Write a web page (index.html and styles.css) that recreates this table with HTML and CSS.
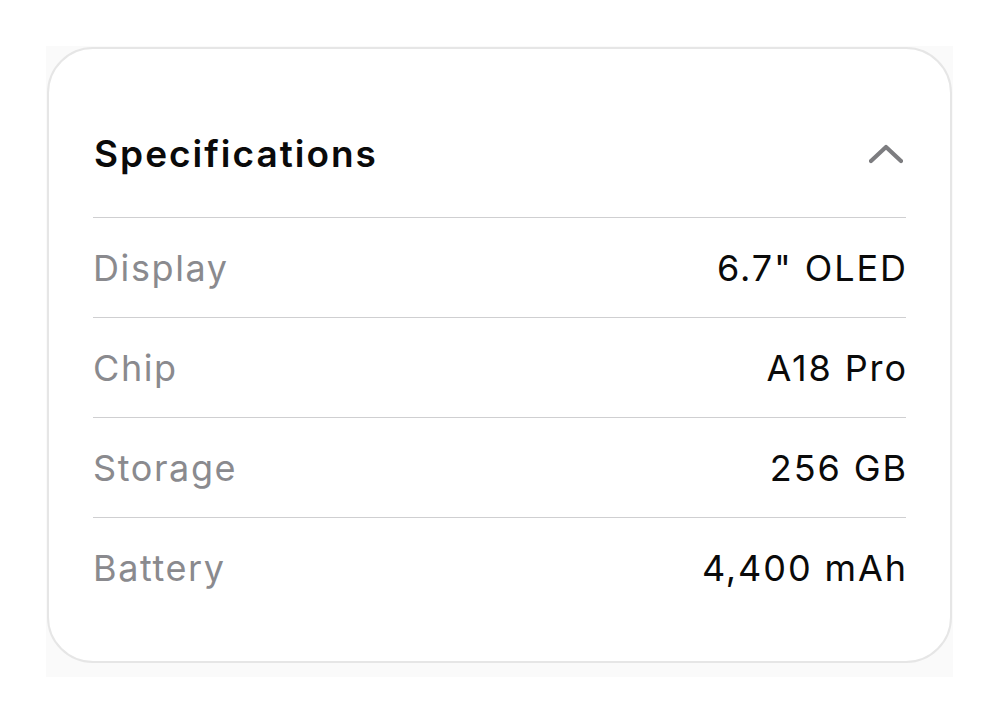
FILE: index.html
```html
<!DOCTYPE html>
<html>
<head>
<meta charset="utf-8">
<link rel="stylesheet" href="styles.css">
</head>
<body>
<div class="frame">
  <section class="card">
    <header class="head">
      <h2 class="title">Specifications</h2>
      <svg class="chev" width="34" height="20" viewBox="0 0 34 20"><path d="M2 17 L17 3 L32 17" fill="none" stroke="#7d7d80" stroke-width="4.2" stroke-linecap="round" stroke-linejoin="round"/></svg>
    </header>
    <div class="row"><span class="label">Display</span><span class="value">6.7" OLED</span></div>
    <div class="row"><span class="label">Chip</span><span class="value">A18 Pro</span></div>
    <div class="row"><span class="label">Storage</span><span class="value">256 GB</span></div>
    <div class="row"><span class="label">Battery</span><span class="value">4,400 mAh</span></div>
  </section>
</div>
</body>
</html>
```
FILE: styles.css
```css
html, body { margin: 0; padding: 0; background: #ffffff; }
body { font-family: Inter, "Noto Sans", sans-serif; }
.frame {
  margin: 46px 0 0 46px;
  width: 907px;
  height: 631px;
  background: #fafafa;
  padding: 1px 1px 0 1px;
  box-sizing: border-box;
}
.card {
  width: 905px;
  height: 616px;
  box-sizing: border-box;
  background: #ffffff;
  border: 2px solid #e6e6e6;
  border-radius: 46px;
  padding: 44px 44px 43px 44px;
  display: flex;
  flex-direction: column;
}
.head {
  height: 125px;
  display: flex;
  align-items: center;
  justify-content: space-between;
  border-bottom: 1.5px solid #cfcfd1;
  box-sizing: border-box;
}
.title {
  margin: -3px 0 0 1px;
  font-size: 37px;
  font-weight: 600;
  color: #0a0a0a;
  letter-spacing: 2px;
}
.chev { margin-right: 3px; margin-top: -3px; }
.row {
  height: 100px;
  display: flex;
  align-items: center;
  justify-content: space-between;
  border-bottom: 1.5px solid #cfcfd1;
  box-sizing: border-box;
  font-size: 36px;
}
.row:last-child { border-bottom: none; }
.label { color: #8a8a8e; letter-spacing: 1.6px; }
.value { color: #0a0a0a; letter-spacing: 1.9px; margin-right: -1.9px; }
```
